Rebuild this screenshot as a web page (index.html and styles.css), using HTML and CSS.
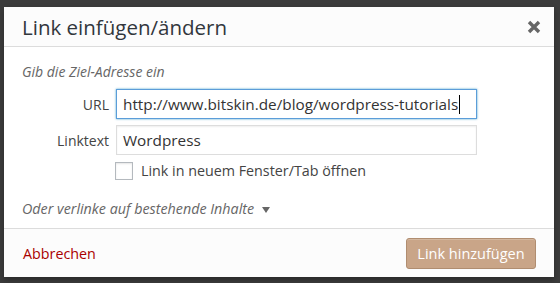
FILE: index.html
```html
<!DOCTYPE html>
<html lang="de">
<head>
    <meta charset="UTF-8">
    <meta name="viewport" content="width=device-width, initial-scale=1.0">
    <title>Link einfügen/ändern</title>
    <link rel="stylesheet" href="styles.css">
</head>
<body>
    <div class="backdrop">
        <div class="link-dialog">
            <div class="dialog-header">
                <h1>Link einfügen/ändern</h1>
                <button class="close-btn" aria-label="Schließen">
                    <svg width="14" height="14" viewBox="0 0 14 14">
                        <path d="M2 2 L12 12 M12 2 L2 12" stroke="#666" stroke-width="3.4" stroke-linecap="butt"/>
                    </svg>
                </button>
            </div>

            <div class="dialog-body">
                <p class="hint">Gib die Ziel-Adresse ein</p>
                <div class="field-row">
                    <label for="url-field">URL</label>
                    <div class="fake-input focused" id="url-field">http://www.bitskin.de/blog/wordpress-tutorials<span class="caret"></span></div>
                </div>
                <div class="field-row">
                    <label for="link-text">Linktext</label>
                    <div class="fake-input" id="link-text">Wordpress</div>
                </div>
                <div class="check-row">
                    <span class="checkbox"></span>
                    <span>Link in neuem Fenster/Tab öffnen</span>
                </div>
                <p class="search-toggle">Oder verlinke auf bestehende Inhalte <span class="arrow"></span></p>
            </div>

            <div class="dialog-footer">
                <a href="#" class="cancel">Abbrechen</a>
                <button class="submit-btn">Link hinzufügen</button>
            </div>
        </div>
    </div>
</body>
</html>
```

FILE: styles.css
```css
body {
    margin: 0;
    background-color: #3c3c3c;
    font-family: 'Open Sans', 'Noto Sans', Arial, sans-serif;
    color: #444;
}
.backdrop {
    padding: 7px 6px 6px 4px;
}
.link-dialog {
    width: 550px;
    height: 270px;
    background-color: white;
    box-shadow: 0 3px 6px rgba(0,0,0,0.3);
    display: flex;
    flex-direction: column;
}
.dialog-header {
    height: 40px;
    background-color: #fcfcfc;
    border-bottom: 1px solid #dcdcdc;
    display: flex;
    align-items: center;
    justify-content: space-between;
    padding: 0 13px 0 18px;
    box-sizing: border-box;
}
h1 {
    margin: 0;
    font-size: 20.5px;
    font-weight: normal;
    color: #32373c;
}
.close-btn {
    background: none;
    border: none;
    padding: 0;
    width: 14px;
    height: 14px;
    cursor: pointer;
    display: flex;
}
.dialog-body {
    flex: 1;
    padding: 15px 18px 0 18px;
}
.hint {
    margin: 0 0 7px 0;
    font-size: 14px;
    font-style: italic;
    color: #666;
    line-height: 20px;
}
.field-row {
    display: flex;
    align-items: center;
    margin-bottom: 6px;
}
.field-row label {
    width: 87px;
    text-align: right;
    margin-right: 7px;
    font-size: 14px;
    color: #444;
}
.fake-input {
    width: 361px;
    height: 30px;
    box-sizing: border-box;
    border: 1px solid #ddd;
    padding: 0 6px;
    font-size: 15.3px;
    line-height: 28px;
    color: #333;
    box-shadow: inset 0 1px 2px rgba(0,0,0,0.07);
    white-space: nowrap;
}
.fake-input.focused {
    border-color: #5b9dd9;
    box-shadow: 0 0 2px rgba(30,140,190,0.8);
}
.caret {
    display: inline-block;
    width: 1px;
    height: 19px;
    background-color: #000;
    vertical-align: -4px;
    margin-left: 1px;
}
.check-row {
    display: flex;
    align-items: center;
    margin-left: 93px;
    font-size: 14.3px;
    color: #444;
}
.checkbox {
    width: 16px;
    height: 16px;
    border: 1px solid #b4b9be;
    background-color: white;
    box-shadow: inset 0 1px 2px rgba(0,0,0,0.1);
    margin-right: 8px;
}
.search-toggle {
    margin: 19px 0 0 0;
    font-size: 14.3px;
    font-style: italic;
    color: #666;
}
.arrow {
    display: inline-block;
    width: 0;
    height: 0;
    border-left: 4px solid transparent;
    border-right: 4px solid transparent;
    border-top: 6px solid #666;
    margin-left: 4px;
    vertical-align: 1px;
}
.dialog-footer {
    height: 49px;
    background-color: #fcfcfc;
    border-top: 1px solid #dcdcdc;
    box-sizing: border-box;
    display: flex;
    align-items: center;
    justify-content: space-between;
    padding: 0 18px 0 19px;
}
.cancel {
    color: #a00;
    text-decoration: none;
    font-size: 14.3px;
}
.submit-btn {
    background-color: #c9a588;
    border: 1px solid #b08d70;
    border-radius: 3px;
    color: white;
    font-family: inherit;
    font-size: 14.5px;
    width: 130px;
    height: 31px;
    padding: 0;
    box-shadow: inset 0 1px 0 rgba(255,255,255,0.2);
    cursor: pointer;
}
```
